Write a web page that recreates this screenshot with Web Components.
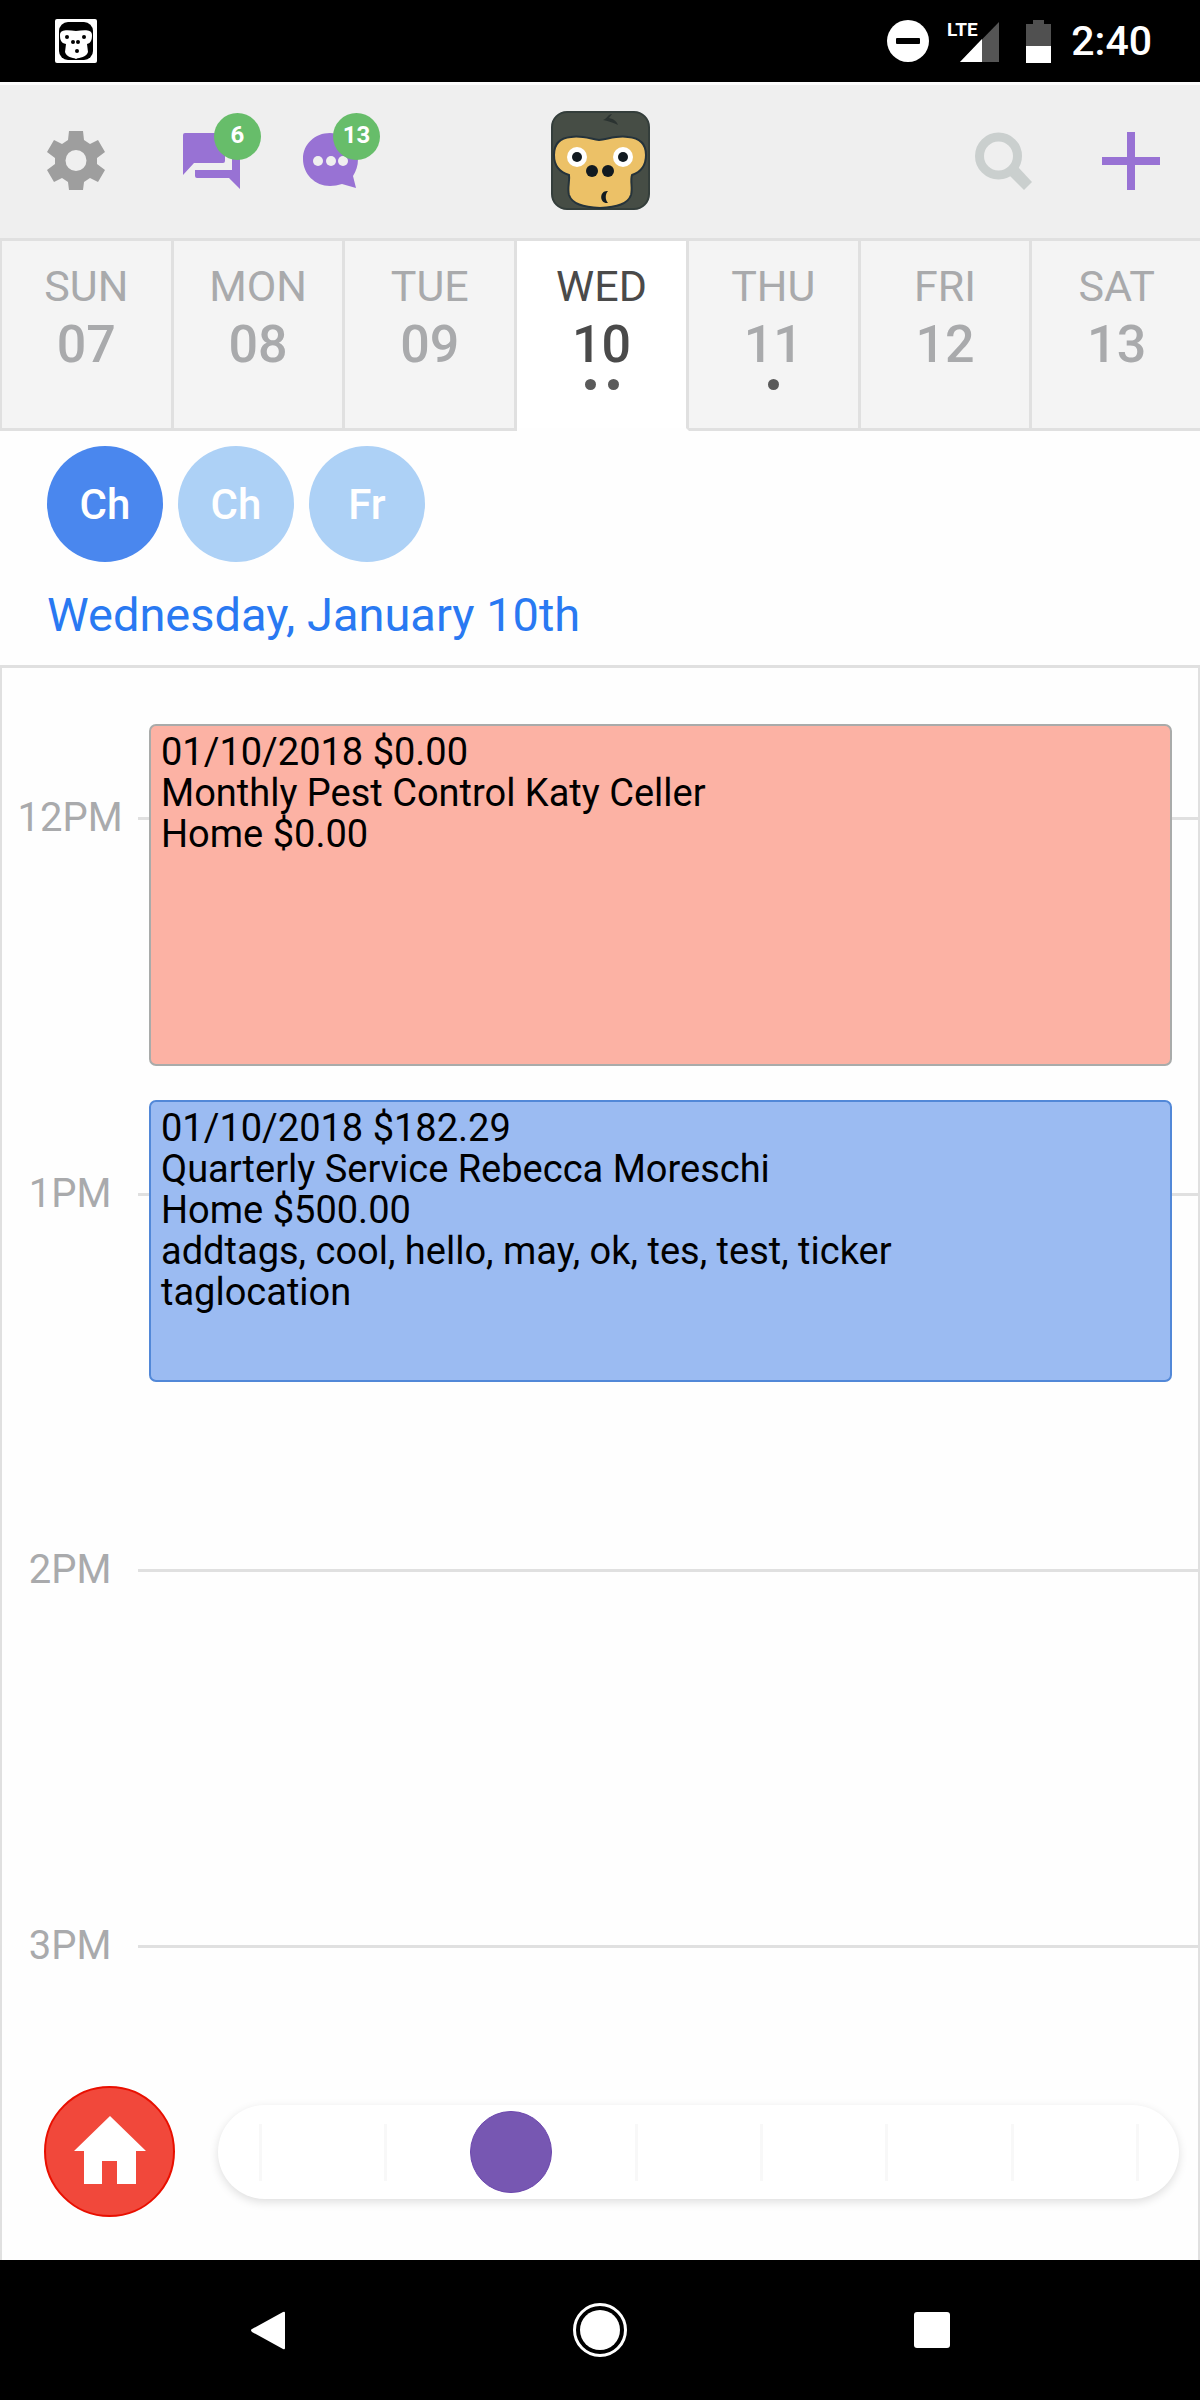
<!DOCTYPE html>
<html lang="en">
<head>
<meta charset="utf-8">
<meta name="viewport" content="width=device-width, initial-scale=1">
<title>Schedule</title>
<style>
html, body {
  margin: 0;
  height: 100%;
}

body {
  --line: #e0e0e0;
  --muted: #a9aaac;
  --purple: #9872d4;
  --green: #67bd6a;
  font-family: Roboto, "Liberation Sans", sans-serif;
  background: #fefefe;
}
</style>
</head>
<body>
<schedule-app></schedule-app>

<script>
class BaseElement extends HTMLElement {
  constructor() {
    super();
    const shadowRoot = this.attachShadow({ mode: "open" });
    const template = document.createElement("template");
    template.innerHTML = this.constructor.markup;
    shadowRoot.appendChild(template.content.cloneNode(true));
  }
}

class StatusBar extends BaseElement {
  static markup = `
<style>
:host {
  display: flex;
  align-items: center;
  height: 82px;
  padding: 0 48px 0 55px;
  background: #000;
  color: #fff;
}
svg { display: block; }
.dnd { margin-left: auto; }
.signal { margin-left: 16px; }
.battery { margin-left: 27px; }
time {
  margin-left: 20px;
  font-size: 41px;
  font-weight: 500;
  line-height: 50px;
}
</style>
<svg width="42" height="44" viewBox="0 0 42 44">
  <rect width="42" height="44" rx="2" fill="#fff"/>
  <rect x="4" y="3" width="34" height="38" rx="9"/>
  <path d="M5 16c0-6 8-5 16-4 8-1 16-2 16 4 0 5-1 8-5 9l1 8c-2 6-8 5-12 7-4-2-9-1-11-7l1-8c-5-1-6-4-6-9z" fill="#fff"/>
  <circle cx="12" cy="18" r="2"/><circle cx="29" cy="18" r="2"/>
  <circle cx="18" cy="23" r="2"/><circle cx="23" cy="23" r="2"/>
  <circle cx="22" cy="32" r="2"/>
</svg>
<svg class="dnd" width="42" height="42" viewBox="0 0 42 42">
  <circle cx="21" cy="21" r="21" fill="#fff"/>
  <rect x="9" y="18" width="24" height="6" rx="1"/>
</svg>
<svg class="signal" width="54" height="56" viewBox="-2 -7 54 56">
  <path d="M13 42 52 2v40z" fill="#555"/>
  <path d="M13 42 35 19v23z" fill="#fff"/>
  <text x="0" y="16" font-size="19" font-weight="700" fill="#fff">LTE</text>
</svg>
<svg class="battery" width="25" height="43" viewBox="0 0 25 43">
  <path d="M7 0h11v4h7v22H0V4h7z" fill="#505050"/>
  <path d="M0 26h25v17H0z" fill="#fff"/>
</svg>
<time>2:40</time>
`;
}

class IconButton extends BaseElement {
  static markup = `
<style>
:host {
  display: block;
  position: relative;
}
button {
  display: block;
  padding: 0;
  border: 0;
  background: none;
}
.badge {
  position: absolute;
  top: -20px;
  right: -21px;
  width: 47px;
  height: 47px;
  border-radius: 50%;
  background: var(--green);
  color: #fff;
  font-size: 24px;
  font-weight: 700;
  line-height: 44px;
  text-align: center;
}
.badge:empty { display: none; }
</style>
<button><slot></slot></button>
<span class="badge"></span>
`;

  connectedCallback() {
    this.shadowRoot.querySelector("button").ariaLabel = this.getAttribute("label");
    this.shadowRoot.querySelector(".badge").textContent = this.getAttribute("badge") || "";
  }
}

class AppHeader extends BaseElement {
  static markup = `
<style>
:host {
  display: grid;
  grid-template-columns: 1fr auto 1fr;
  align-items: center;
  height: 159px;
  padding: 0 40px 2px;
  border-top: 3px solid #fcfcfc;
  border-bottom: 3px solid var(--line);
  box-sizing: border-box;
  background: #efefef;
}
svg { display: block; }
.left, .right {
  display: flex;
  align-items: center;
}
.left { padding-left: 7px; }
.right {
  justify-content: flex-end;
  gap: 70px;
}
.chat { margin-left: 78px; }
.talk { margin-left: 63px; }
</style>
<div class="left">
  <icon-button label="Settings">
    <svg width="58" height="59" viewBox="0 0 58 59" fill="#9e9e9e">
      <path fill-rule="evenodd" d="M22 0h14l1 9 6 4 8-4 7 12-8 6v6l8 6-7 12-8-4-6 4-1 8H22l-1-8-6-4-8 4-7-12 8-6v-6l-8-6L7 9l8 4 6-4zM29 19a10.500 10.500 0 1 0 0 21 10.500 10.500 0 1 0 0-21z"/>
    </svg>
  </icon-button>
  <icon-button class="chat" label="Messages" badge="6">
    <svg width="57" height="56" viewBox="0 0 57 56" fill="#9872d4">
      <path d="M2 0h38q2 0 2 2v26q0 2-2 2H11L0 42V2q0-2 2-2z"/>
      <path d="M49 10h6q2 0 2 2v44L46 45H14q-2 0-2-2v-6h37z"/>
    </svg>
  </icon-button>
  <icon-button class="talk" label="Chats" badge="13">
    <svg width="56" height="56" viewBox="0 0 56 56">
      <path d="M27 0c16 0 28 12 28 26 0 7-2 12-5 17l3 12-14-4c-4 1-8 2-12 2C12 53 0 41 0 26S12 0 27 0z" fill="#9872d4"/>
      <g fill="#efefef"><circle cx="15" cy="28" r="5"/><circle cx="28" cy="28" r="5"/><circle cx="40" cy="28" r="5"/></g>
    </svg>
  </icon-button>
</div>
<svg width="99" height="99" viewBox="0 0 99 99">
  <rect x="1" y="1" width="97" height="97" rx="15" fill="#464d45" stroke="#343e3b" stroke-width="2"/>
  <path d="M3 44c0-11 6-17 17-18 10-2 20 2 28 3 9-1 19-5 29-3 12 1 18 7 18 18 0 10-5 17-14 20-2 6 1 13-1 20-3 9-14 12-31 13-17-1-28-4-31-13-2-7 1-14 0-20C8 61 3 54 3 44z" fill="#ecc167" stroke="#25333b" stroke-width="2"/>
  <g fill="#fff"><circle cx="26" cy="46" r="10"/><circle cx="72" cy="46" r="10"/></g>
  <g fill="#111a20">
    <circle cx="26" cy="46" r="5"/><circle cx="72" cy="46" r="5"/>
    <circle cx="41" cy="60" r="6"/><circle cx="57" cy="60" r="6"/>
    <path d="M57 80c-9-1-9 13 0 12-3-3-3-9 0-12z"/>
    <path d="M52 9c5-2 5-6 9-6l-3 4c5 1 8 4 9 7-4-2-9-4-15-5z" fill="#2b3331"/>
  </g>
</svg>
<div class="right">
  <icon-button label="Search">
    <svg width="57" height="58" viewBox="0 0 57 58">
      <circle cx="23.500" cy="24" r="19" fill="none" stroke="#cacfce" stroke-width="9"/>
      <path d="m35 44 8-9 14 15-8 8z" fill="#cacfce"/>
    </svg>
  </icon-button>
  <icon-button label="Add">
    <svg width="58" height="58" viewBox="0 0 58 58">
      <path d="M25 0h8v25h25v8H33v25h-8V33H0v-8h25z" fill="#9872d4"/>
    </svg>
  </icon-button>
</div>
`;
}

class DayCell extends BaseElement {
  static markup = `
<style>
:host {
  display: block;
  flex: 1;
}
button {
  display: flex;
  flex-direction: column;
  align-items: center;
  width: 100%;
  height: 190px;
  padding: 20px 0 0;
  border: solid var(--line);
  border-width: 0 3px 3px 0;
  background: #f4f4f4;
  color: var(--muted);
  font-family: inherit;
}
:host([active]) button {
  border-bottom-color: #fefefe;
  background: #fff;
  color: #4a4a4a;
}
.name {
  font-size: 43px;
  line-height: 50px;
}
.number {
  font-size: 52px;
  font-weight: 500;
  line-height: 68px;
}
.dots {
  display: flex;
  gap: 12px;
}
.dots i {
  width: 11px;
  height: 11px;
  border-radius: 50%;
  background: #5a5a5a;
}
</style>
<button>
  <span class="name"><slot></slot></span>
  <span class="number"></span>
  <span class="dots"></span>
</button>
`;

  connectedCallback() {
    this.shadowRoot.querySelector(".number").textContent = this.getAttribute("number");
    const jobs = parseInt(this.getAttribute("jobs")) || 0;
    this.shadowRoot.querySelector(".dots").innerHTML = "<i></i>".repeat(jobs);
  }
}

class WeekStrip extends BaseElement {
  static markup = `
<style>
:host {
  display: block;
  overflow: hidden;
}
.days {
  display: flex;
  margin-right: -4px;
  border-left: 2px solid var(--line);
}
</style>
<div class="days"><slot></slot></div>
`;
}

class TechChip extends BaseElement {
  static markup = `
<style>
:host { display: block; }
button {
  display: block;
  width: 116px;
  height: 116px;
  padding: 0;
  border: 0;
  border-radius: 50%;
  background: #add1f6;
  color: #fff;
  font-family: inherit;
  font-size: 42px;
  font-weight: 500;
}
:host([selected]) button { background: #4a87ee; }
</style>
<button><slot></slot></button>
`;
}

class DayHeading extends BaseElement {
  static markup = `
<style>
:host {
  display: block;
  padding: 15px 47px 21px;
}
.techs {
  display: flex;
  gap: 15px;
}
h1 {
  margin: 24px 0 0;
  color: #2979f2;
  font-size: 47px;
  font-weight: 400;
  line-height: 58px;
}
</style>
<div class="techs"><slot name="tech"></slot></div>
<h1><slot></slot></h1>
`;
}

class HourRow extends BaseElement {
  static markup = `
<style>
:host {
  display: grid;
  grid-template-columns: 136px 1fr;
  align-items: center;
  color: var(--muted);
  font-size: 40px;
  line-height: 44px;
  text-align: center;
}
hr {
  width: 100%;
  height: 3px;
  margin: 0;
  border: 0;
  background: var(--line);
}
</style>
<span><slot></slot></span>
<hr>
`;
}

class JobCard extends BaseElement {
  static markup = `
<style>
:host {
  display: block;
  padding: 6px 10px;
  border: 2px solid #a9abaa;
  border-radius: 7px;
  box-sizing: border-box;
  background: #fcb2a4;
  color: #000;
  font-size: 38px;
  line-height: 41px;
}
:host([color="blue"]) {
  border-color: #5288d8;
  background: #9bbbf2;
}
::slotted(p) { margin: 0; }
</style>
<slot></slot>
`;

  connectedCallback() {
    this.style.minHeight = `${this.getAttribute("length")}px`;
  }
}

class DayAgenda extends BaseElement {
  static markup = `
<style>
:host {
  display: grid;
  border: solid var(--line);
  border-width: 3px 2px 0;
}
.hours, .jobs {
  grid-area: 1 / 1;
  display: flex;
  flex-direction: column;
}
.hours {
  gap: 332px;
  padding-top: 128px;
}
.jobs {
  gap: 34px;
  padding: 56px 26px 0 147px;
}
</style>
<div class="hours"><slot name="hour"></slot></div>
<div class="jobs"><slot></slot></div>
`;
}

class BottomDock extends BaseElement {
  static markup = `
<style>
:host {
  display: flex;
  flex: 1;
  align-items: flex-end;
  gap: 43px;
  padding: 0 19px 43px 42px;
  border: solid var(--line);
  border-width: 0 2px;
}
svg { display: block; }
.home {
  display: grid;
  place-items: center;
  width: 131px;
  height: 131px;
  padding: 0 0 4px;
  border: 2px solid #e90f00;
  border-radius: 50%;
  box-sizing: border-box;
  background: #f1483b;
}
.track {
  display: grid;
  flex: 1;
  align-items: center;
  height: 94px;
  margin-bottom: 18px;
  border-radius: 47px;
  background: #fff;
  box-shadow: 0 3px 10px rgba(0, 0, 0, 0.13);
}
.ticks, input { grid-area: 1 / 1; }
.ticks {
  display: flex;
  justify-content: space-between;
  padding: 0 40px 0 41px;
}
.ticks i {
  width: 3px;
  height: 57px;
  background: #f8f8f8;
}
input {
  appearance: none;
  height: 82px;
  margin: 0 2px;
  background: none;
}
input::-webkit-slider-thumb {
  appearance: none;
  width: 82px;
  height: 82px;
  border: 1px solid #6c47ae;
  border-radius: 50%;
  background: #7757b2;
}
</style>
<button class="home" aria-label="Home">
  <svg width="72" height="68" viewBox="0 0 72 68">
    <path d="M36 0 72 35H62v33H43V45H28v23H10V35H0z" fill="#fff"/>
  </svg>
</button>
<div class="track">
  <div class="ticks"><i></i><i></i><i></i><i></i><i></i><i></i><i></i><i></i></div>
  <input type="range" min="0" max="7" value="2" aria-label="Scale">
</div>
`;
}

class NavBar extends BaseElement {
  static markup = `
<style>
:host {
  display: grid;
  grid-template-columns: repeat(3, 1fr);
  height: 140px;
  padding: 0 102px;
  background: #000;
}
button {
  display: grid;
  place-items: center;
  padding: 0;
  border: 0;
  background: none;
}
</style>
<button aria-label="Back">
  <svg width="34" height="39" viewBox="0 0 34 39"><path d="M32 1q2-1 2 1v35q0 2-2 1L1 21q-2-2 0-3z" fill="#fff"/></svg>
</button>
<button aria-label="Home">
  <svg width="54" height="54" viewBox="0 0 54 54">
    <circle cx="27" cy="27" r="25.500" fill="none" stroke="#fff" stroke-width="3"/>
    <circle cx="27" cy="27" r="20" fill="#fff"/>
  </svg>
</button>
<button aria-label="Recent">
  <svg width="36" height="36" viewBox="0 0 36 36"><rect width="36" height="36" rx="3" fill="#fff"/></svg>
</button>
`;
}

class ScheduleApp extends BaseElement {
  static markup = `
<style>
:host {
  display: flex;
  flex-direction: column;
  min-height: 100%;
}
</style>
<status-bar></status-bar>
<app-header></app-header>
<week-strip>
  <day-cell number="07">SUN</day-cell>
  <day-cell number="08">MON</day-cell>
  <day-cell number="09">TUE</day-cell>
  <day-cell number="10" jobs="2" active>WED</day-cell>
  <day-cell number="11" jobs="1">THU</day-cell>
  <day-cell number="12">FRI</day-cell>
  <day-cell number="13">SAT</day-cell>
</week-strip>
<day-heading>
  <tech-chip slot="tech" selected>Ch</tech-chip>
  <tech-chip slot="tech">Ch</tech-chip>
  <tech-chip slot="tech">Fr</tech-chip>
  Wednesday, January 10th
</day-heading>
<day-agenda>
  <hour-row slot="hour">12PM</hour-row>
  <hour-row slot="hour">1PM</hour-row>
  <hour-row slot="hour">2PM</hour-row>
  <hour-row slot="hour">3PM</hour-row>
  <job-card length="342">
    <p>01/10/2018 $0.00</p>
    <p>Monthly Pest Control Katy Celler</p>
    <p>Home $0.00</p>
  </job-card>
  <job-card length="282" color="blue">
    <p>01/10/2018 $182.29</p>
    <p>Quarterly Service Rebecca Moreschi</p>
    <p>Home $500.00</p>
    <p>addtags, cool, hello, may, ok, tes, test, ticker</p>
    <p>taglocation</p>
  </job-card>
</day-agenda>
<bottom-dock></bottom-dock>
<nav-bar></nav-bar>
`;
}

customElements.define("status-bar", StatusBar);
customElements.define("icon-button", IconButton);
customElements.define("app-header", AppHeader);
customElements.define("day-cell", DayCell);
customElements.define("week-strip", WeekStrip);
customElements.define("tech-chip", TechChip);
customElements.define("day-heading", DayHeading);
customElements.define("hour-row", HourRow);
customElements.define("job-card", JobCard);
customElements.define("day-agenda", DayAgenda);
customElements.define("bottom-dock", BottomDock);
customElements.define("nav-bar", NavBar);
customElements.define("schedule-app", ScheduleApp);
</script>
</body>
</html>
